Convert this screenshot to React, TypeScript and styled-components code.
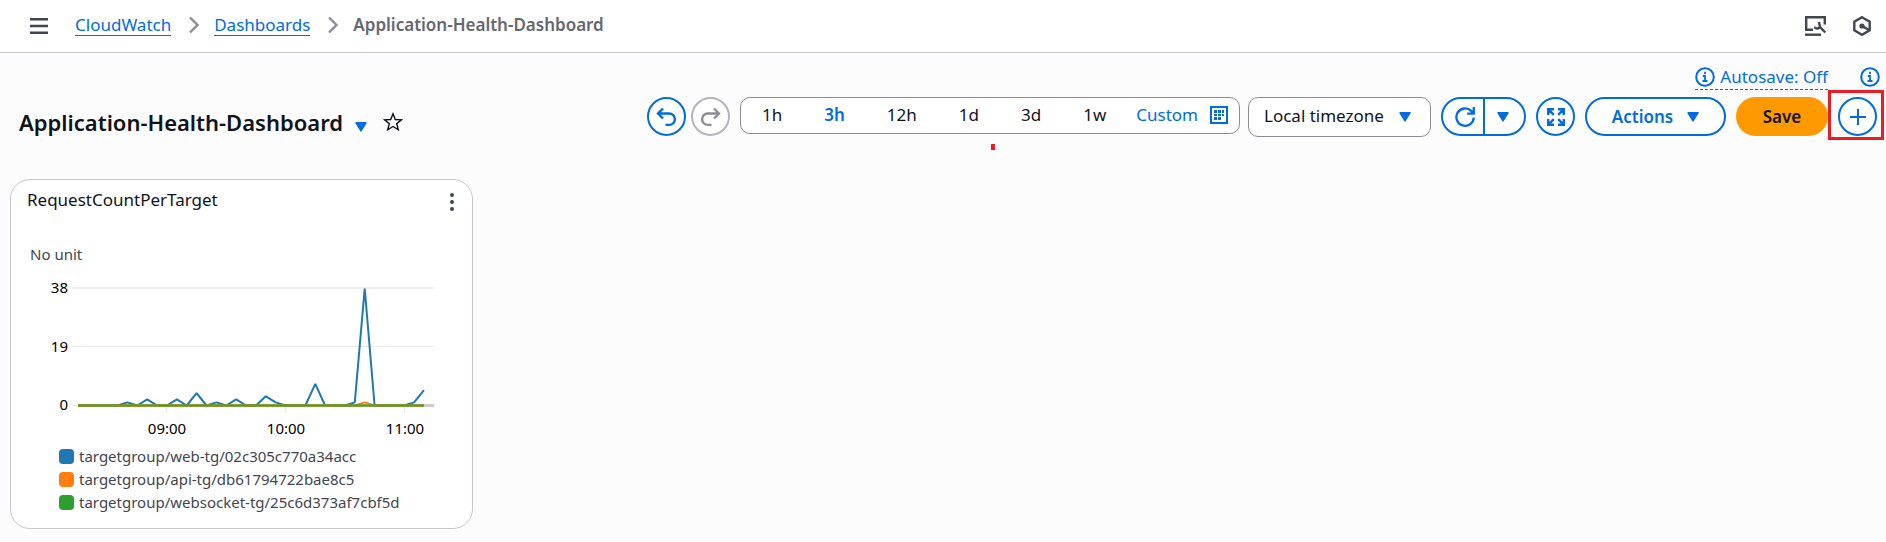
import React from "react";
import styled, { createGlobalStyle, css } from "styled-components";

const blue = "#006ce0";
const ink = "#0f141a";
const grey = "#424650";

const GlobalStyle = createGlobalStyle`
  *, *::before, *::after { box-sizing: border-box; }
  body {
    margin: 0;
    background: #fcfcfd;
    color: ${ink};
    font-family: "Noto Sans", "Open Sans", sans-serif;
    font-size: 17px;
    line-height: 24px;
  }
  button, select { font: inherit; color: inherit; margin: 0; padding: 0; cursor: pointer; }
  svg { display: block; flex: none; }
`;

const TopBar = styled.header`
  display: flex;
  align-items: center;
  justify-content: space-between;
  height: 53px;
  padding: 0 15px 0 29px;
  background: #fff;
  border-bottom: 1px solid #c6c6cd;
`;

const TopGroup = styled.div<{ $gap: number }>`
  display: flex;
  align-items: center;
  gap: ${(p) => p.$gap}px;
`;

const PlainButton = styled.button`
  display: flex;
  border: 0;
  background: none;
  color: ${grey};
`;

const Crumbs = styled.ol`
  display: flex;
  align-items: center;
  gap: 14px;
  margin: 0;
  padding: 0 0 2px;
  list-style: none;
  color: #8c8c94;
`;

const Crumb = styled.li`
  display: flex;
  align-items: center;
  gap: 17px;
`;

const CrumbLink = styled.a`
  color: ${blue};
  text-decoration: none;
  border-bottom: 1px solid ${blue};
  line-height: 20px;
`;

const CrumbCurrent = styled.span`
  color: #656871;
  font-weight: 600;
`;

const PageHeader = styled.div`
  display: flex;
  justify-content: space-between;
  padding: 12px 9px 0 19px;
`;

const TitleGroup = styled.div`
  display: flex;
  align-items: center;
  gap: 12px;
  height: 28px;
  margin-top: 43px;
`;

const Title = styled.h1`
  margin: 0;
  font-size: 22px;
  line-height: 28px;
  font-weight: 600;
`;

const TitleTools = styled.div`
  display: flex;
  align-items: flex-end;
  gap: 16px;
`;

const TitleButton = styled(PlainButton)<{ $color: string }>`
  color: ${(p) => p.$color};
`;

const Controls = styled.div`
  display: flex;
  flex-direction: column;
  align-items: flex-end;
`;

const StatusRow = styled.div`
  display: flex;
  align-items: flex-start;
  gap: 32px;
  height: 32px;
  margin-right: -3px;
  color: ${blue};
`;

const Autosave = styled.a`
  display: flex;
  align-items: center;
  gap: 5px;
  height: 25px;
  color: ${blue};
  text-decoration: none;
  border-bottom: 1px dashed ${blue};
`;

const InfoButton = styled(PlainButton)`
  color: ${blue};
  padding: 2px 0;
`;

const Toolbar = styled.div`
  display: flex;
  align-items: flex-start;
  gap: 10px;
`;

const History = styled.div`
  display: flex;
  gap: 5px;
`;

const outline = css`
  height: 39px;
  border: 2px solid ${blue};
  background: #fff;
  color: ${blue};
`;

const RoundButton = styled.button`
  ${outline}
  display: flex;
  align-items: center;
  justify-content: center;
  width: 39px;
  border-radius: 50%;
  &:disabled { border-color: #b4b4bb; color: #8c8c94; cursor: default; }
`;

const RangeGroup = styled.div`
  display: flex;
  gap: 8px;
`;

const Ranges = styled.div`
  position: relative;
  display: flex;
  align-items: center;
  gap: 42px;
  width: 500px;
  height: 37px;
  padding: 0 12px 2px 21px;
  border: 1px solid #8c8c94;
  border-radius: 10px;
  background: #fff;
`;

const RangeButton = styled.button`
  display: flex;
  align-items: center;
  gap: 12px;
  border: 0;
  background: none;
  color: ${ink};
  line-height: 24px;
  &[aria-pressed="true"] { color: ${blue}; font-weight: 600; }
`;

const CustomButton = styled(RangeButton)`
  margin-left: -12px;
  color: ${blue};
`;

const RedMark = styled.span`
  position: absolute;
  left: 250px;
  top: 46px;
  width: 4px;
  height: 6px;
  background: #ed1c24;
`;

const SelectBox = styled.label`
  display: grid;
  align-items: center;
  width: 183px;
  height: 40px;
  color: ${blue};
  & > * { grid-area: 1 / 1; }
  & > svg { justify-self: end; margin-right: 20px; pointer-events: none; }
`;

const Select = styled.select`
  appearance: none;
  width: 100%;
  height: 40px;
  padding: 0 36px 2px 15px;
  border: 1px solid #8c8c94;
  border-radius: 10px;
  background: #fff;
  color: ${ink};
`;

const Split = styled.div`
  display: flex;
`;

const SplitButton = styled.button<{ $side: "left" | "right" }>`
  ${outline}
  display: flex;
  align-items: center;
  justify-content: center;
  ${(p) =>
    p.$side === "left"
      ? "width: 44px; border-radius: 20px 0 0 20px; padding-left: 4px;"
      : "width: 43px; border-radius: 0 20px 20px 0; margin-left: -2px; padding-right: 4px;"}
`;

const ActionsButton = styled.button`
  ${outline}
  display: flex;
  align-items: center;
  justify-content: center;
  gap: 14px;
  width: 141px;
  border-radius: 20px;
  font-weight: 600;
`;

const SaveButton = styled.button`
  width: 92px;
  height: 39px;
  border: 0;
  border-radius: 20px;
  background: #ff9900;
  color: ${ink};
  font-weight: 600;
`;

const Highlighted = styled.div`
  position: relative;
  &::after {
    content: "";
    position: absolute;
    inset: -7px -7px -4px -10px;
    border: 3px solid #ed1c24;
    pointer-events: none;
  }
`;

const Board = styled.main`
  display: grid;
  grid-template-columns: repeat(4, minmax(0, 1fr));
  gap: 5px;
  padding: 42px 10px 12px;
`;

const Widget = styled.section`
  min-width: 463px;
  padding: 8px 18px 15px 16px;
  border: 1px solid #c6c6cd;
  border-radius: 20px;
  background: #fff;
`;

const WidgetHead = styled.div`
  display: flex;
  align-items: center;
  justify-content: space-between;
`;

const WidgetTitle = styled.h2`
  margin: 0;
  font-size: 17px;
  line-height: 24px;
  font-weight: 400;
`;

const MenuButton = styled(PlainButton)`
  padding-top: 3px;
`;

const Unit = styled.div`
  margin: 30px 0 0 3px;
  font-size: 15px;
  line-height: 24px;
  color: ${grey};
`;

const ChartLabel = styled.text`
  font-size: 15px;
  fill: #000;
`;

const Legend = styled.ul`
  display: grid;
  gap: 2px;
  margin: 0;
  padding: 0 0 0 32px;
  list-style: none;
  font-size: 15px;
  line-height: 21px;
  color: ${grey};
`;

const LegendItem = styled.li`
  display: flex;
  align-items: center;
  gap: 5px;
`;

const Swatch = styled.span<{ $color: string }>`
  width: 15px;
  height: 15px;
  border-radius: 4px;
  background: ${(p) => p.$color};
`;

const Caret = () => (
  <svg width="12" height="10" viewBox="0 0 12 10" aria-hidden="true">
    <path d="M1 .8h10L6 9z" fill="currentColor" stroke="currentColor" strokeWidth="1.4" strokeLinejoin="round" />
  </svg>
);

const Chevron = () => (
  <svg width="12" height="18" viewBox="0 0 12 18" fill="none" stroke="currentColor" strokeWidth="2.4" aria-hidden="true">
    <path d="M2 1.5 9.5 9 2 16.5" />
  </svg>
);

const Undo = () => (
  <svg width="21" height="20" viewBox="0 0 21 20" fill="none" stroke="currentColor" strokeWidth="2.4" aria-hidden="true">
    <path d="M7 1.5 2 6.500 7 11.500M2 6.500h11.200a5.700 5.700 0 0 1 0 11.400h-3.700" />
  </svg>
);

const Redo = () => (
  <svg width="21" height="20" viewBox="0 0 21 20" fill="none" stroke="currentColor" strokeWidth="2.4" aria-hidden="true">
    <path d="m14 1.500 5 5-5 5M19 6.500H7.800a5.700 5.700 0 0 0 0 11.400h3.700" />
  </svg>
);

const Calendar = () => (
  <svg width="18" height="18" viewBox="0 0 18 18" aria-hidden="true">
    <path d="M1 1h16v16H1z" fill="none" stroke="currentColor" strokeWidth="2" />
    <path
      d="M4 4h3v3H4zM8 4h3v3H8zM12 4h2v3h-2zM4 8h3v2H4zM8 8h3v2H8zM12 8h2v2h-2zM4 11h3v3H4zM8 11h3v3H8z"
      fill="currentColor"
    />
  </svg>
);

const Refresh = () => (
  <svg width="20" height="20" viewBox="0 0 20 20" fill="none" stroke="currentColor" strokeWidth="2.3" aria-hidden="true">
    <path d="M18.800 10.500a8.700 8.700 0 1 1-2.600-6.600l2.300 2.400M18.800 0v6.600h-6.600" />
  </svg>
);

const Expand = () => (
  <svg width="18" height="18" viewBox="0 0 18 18" fill="none" stroke="currentColor" strokeWidth="2.4" aria-hidden="true">
    <path d="M1.200 7V1.200H7M1.200 1.200 6.800 6.800M11 1.200h5.800V7M16.800 1.200l-5.600 5.600M1.200 11v5.800H7M1.200 16.800l5.600-5.600M16.800 11v5.800H11M16.800 16.800l-5.600-5.600" />
  </svg>
);

const Plus = () => (
  <svg width="16" height="16" viewBox="0 0 16 16" stroke="currentColor" strokeWidth="2" aria-hidden="true">
    <path d="M8 0v16M0 8h16" />
  </svg>
);

const Info = () => (
  <svg width="20" height="20" viewBox="0 0 20 20" fill="none" stroke="currentColor" strokeWidth="2" aria-hidden="true">
    <circle cx="10" cy="10" r="8.800" />
    <path d="M10 4.800v2.200M7.800 9H10v5M7.500 14h5" strokeWidth="1.800" />
  </svg>
);

const Hamburger = () => (
  <svg width="19" height="16" viewBox="0 0 19 16" stroke="currentColor" strokeWidth="2.4" aria-hidden="true">
    <path d="M1 1.200h18M1 8h18M1 14.800h18" />
  </svg>
);

const Star = () => (
  <svg width="20" height="20" viewBox="0 0 20 20" fill="none" stroke="currentColor" strokeWidth="1.400" aria-hidden="true">
    <path d="m10 1.800 2.300 5.700 6.100.4-4.700 3.900 1.600 6-5.300-3.300-5.300 3.300 1.600-6L1.600 7.900l6.100-.4z" />
  </svg>
);

const ScreenTool = () => (
  <svg width="22" height="20" viewBox="0 0 22 20" fill="none" stroke="currentColor" aria-hidden="true">
    <path d="M8 13.800H1.200V1.200h18.600V8.500" strokeWidth="2.400" />
    <path d="M0 18.700h16" strokeWidth="2.400" />
    <path d="M9.200 11.200l2.200 1.100c1.800.5 3.400-.6 3.400-2.600L13.900 6M14 10.200l6.300 6.300" strokeWidth="2.400" />
  </svg>
);

const Hexagon = () => (
  <svg width="18" height="20" viewBox="0 0 18 20" fill="none" stroke="currentColor" strokeWidth="2.400" aria-hidden="true">
    <path d="m9 1.200 7.700 4.400v8.800L9 18.800l-7.700-4.400V5.600z" />
    <circle cx="9" cy="10" r="2.600" fill="currentColor" stroke="none" />
    <path d="m9 10 7 4" />
  </svg>
);

const Dots = () => (
  <svg width="4" height="18" viewBox="0 0 4 18" fill="currentColor" aria-hidden="true">
    <circle cx="2" cy="2" r="2" />
    <circle cx="2" cy="9" r="2" />
    <circle cx="2" cy="16" r="2" />
  </svg>
);

const series = [
  {
    name: "targetgroup/web-tg/02c305c770a34acc",
    color: "#1f77b4",
    points: { 5: 1, 7: 2, 10: 2, 12: 4, 14: 1, 16: 2, 19: 3, 20: 1, 24: 7, 28: 1, 29: 38, 34: 1, 35: 5 } as Record<number, number>,
  },
  { name: "targetgroup/api-tg/db61794722bae8c5", color: "#ff7f0e", points: { 29: 1 } as Record<number, number> },
  { name: "targetgroup/websocket-tg/25c6d373af7cbf5d", color: "#2ca02c", points: {} as Record<number, number> },
];

const linePath = (points: Record<number, number>) =>
  Array.from({ length: 36 }, (_, i) => {
    const x = 51 + (i * 346) / 35;
    const y = 139.5 - ((points[i] ?? 0) * 117) / 38;
    return `${i ? "L" : "M"}${x.toFixed(1)} ${y.toFixed(1)}`;
  }).join("");

const Chart = () => (
  <svg width="410" height="180" viewBox="0 0 410 180" role="img" aria-label="RequestCountPerTarget by target group">
    <path d="M45 22h362" stroke="#eee" strokeWidth="2" />
    <path d="M45 80.500h362M45 139.500h6M139.500 140v7M258.500 140v7M377.500 140v7" stroke="#e8e8e8" />
    <path d="M51 139.500h356" stroke="#ccc" strokeWidth="3" />
    {series.map((s) => (
      <path key={s.name} d={linePath(s.points)} fill="none" stroke={s.color} strokeWidth="2" strokeLinejoin="bevel" />
    ))}
    <path d="M51 139.500h346" stroke="#7f9c1e" strokeWidth="3" opacity="0.5" />
    {[["38", 27], ["19", 86], ["0", 144]].map(([t, y]) => (
      <ChartLabel key={t} x="41" y={y} textAnchor="end">{t}</ChartLabel>
    ))}
    {[["09:00", 140], ["10:00", 259], ["11:00", 378]].map(([t, x]) => (
      <ChartLabel key={t} x={x} y="168" textAnchor="middle">{t}</ChartLabel>
    ))}
  </svg>
);

export default function App() {
  const [range, setRange] = React.useState("3h");
  return (
    <>
      <GlobalStyle />
      <TopBar>
        <TopGroup $gap={27}>
          <PlainButton aria-label="Open navigation"><Hamburger /></PlainButton>
          <nav aria-label="Breadcrumbs">
            <Crumbs>
              <Crumb><CrumbLink href="#cloudwatch">CloudWatch</CrumbLink><Chevron /></Crumb>
              <Crumb><CrumbLink href="#dashboards">Dashboards</CrumbLink><Chevron /></Crumb>
              <Crumb><CrumbCurrent aria-current="page">Application-Health-Dashboard</CrumbCurrent></Crumb>
            </Crumbs>
          </nav>
        </TopGroup>
        <TopGroup $gap={26}>
          <PlainButton aria-label="Tools"><ScreenTool /></PlainButton>
          <PlainButton aria-label="Amazon Q"><Hexagon /></PlainButton>
        </TopGroup>
      </TopBar>

      <PageHeader>
        <TitleGroup>
          <Title>Application-Health-Dashboard</Title>
          <TitleTools>
            <TitleButton $color={blue} aria-label="Switch dashboard"><Caret /></TitleButton>
            <TitleButton $color={ink} aria-label="Add to favorites"><Star /></TitleButton>
          </TitleTools>
        </TitleGroup>
        <Controls>
          <StatusRow>
            <Autosave href="#autosave"><Info />Autosave: Off</Autosave>
            <InfoButton aria-label="Information"><Info /></InfoButton>
          </StatusRow>
          <Toolbar>
            <History>
              <RoundButton aria-label="Undo"><Undo /></RoundButton>
              <RoundButton aria-label="Redo" disabled><Redo /></RoundButton>
            </History>
            <RangeGroup>
              <Ranges>
                {["1h", "3h", "12h", "1d", "3d", "1w"].map((r) => (
                  <RangeButton key={r} aria-pressed={r === range} onClick={() => setRange(r)}>{r}</RangeButton>
                ))}
                <CustomButton>Custom<Calendar /></CustomButton>
                <RedMark />
              </Ranges>
              <SelectBox>
                <Select aria-label="Timezone" defaultValue="local">
                  <option value="local">Local timezone</option>
                </Select>
                <Caret />
              </SelectBox>
            </RangeGroup>
            <Split>
              <SplitButton $side="left" aria-label="Refresh"><Refresh /></SplitButton>
              <SplitButton $side="right" aria-label="Refresh options"><Caret /></SplitButton>
            </Split>
            <RoundButton aria-label="Full screen"><Expand /></RoundButton>
            <ActionsButton>Actions<Caret /></ActionsButton>
            <SaveButton>Save</SaveButton>
            <Highlighted>
              <RoundButton aria-label="Add widget"><Plus /></RoundButton>
            </Highlighted>
          </Toolbar>
        </Controls>
      </PageHeader>

      <Board>
        <Widget>
          <WidgetHead>
            <WidgetTitle>RequestCountPerTarget</WidgetTitle>
            <MenuButton aria-label="Widget actions"><Dots /></MenuButton>
          </WidgetHead>
          <Unit>No unit</Unit>
          <Chart />
          <Legend>
            {series.map((s) => (
              <LegendItem key={s.name}><Swatch $color={s.color} />{s.name}</LegendItem>
            ))}
          </Legend>
        </Widget>
      </Board>
    </>
  );
}
